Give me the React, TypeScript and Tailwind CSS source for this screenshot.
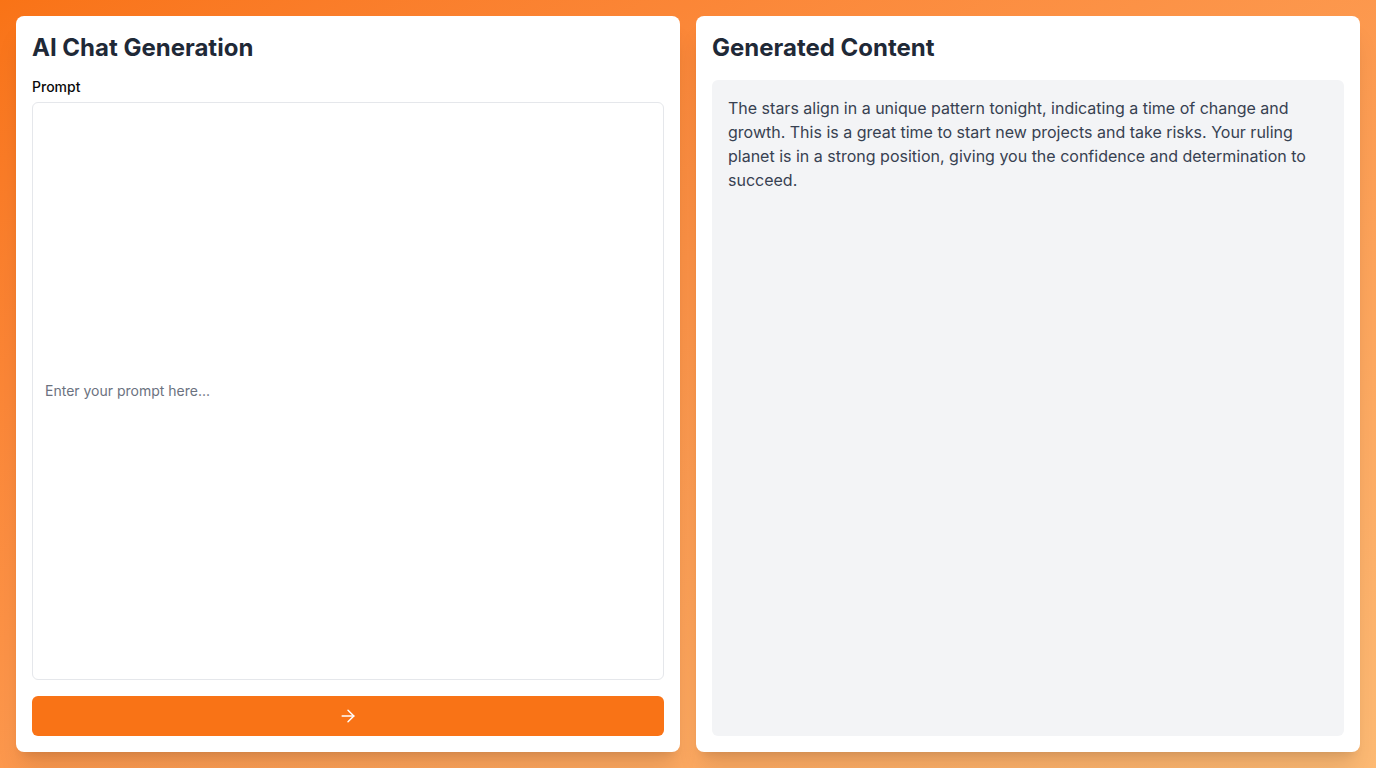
import { ArrowRight } from "lucide-react";

export default function App() {
  return (
    <div className="h-screen w-full bg-gradient-to-br from-[#f97316] to-[#fdba74] p-4 font-['Inter',sans-serif]">
      <div className="grid h-full grid-cols-2 gap-4">
        {/* ── Left: prompt ── */}
        <div className="flex flex-col rounded-lg bg-white p-4 shadow-xl">
          <h1 className="mb-4 text-2xl font-bold text-[#1f2937]">AI Chat Generation</h1>
          <label className="mb-2 block text-sm font-medium leading-none text-[#0a0a0a]">Prompt</label>
          <input
            type="text"
            placeholder="Enter your prompt here..."
            className="w-full flex-1 rounded-md border border-[#e5e7eb] px-3 text-sm text-[#111827] placeholder:text-[#6b7280] outline-none"
          />
          <button className="mt-4 flex h-10 w-full items-center justify-center rounded-md bg-[#f97316] text-white">
            <ArrowRight className="h-5 w-5" strokeWidth={1.75} />
          </button>
        </div>

        {/* ── Right: output ── */}
        <div className="flex flex-col rounded-lg bg-white p-4 shadow-xl">
          <h2 className="mb-4 text-2xl font-bold text-[#1f2937]">Generated Content</h2>
          <div className="flex-1 rounded-md bg-[#f3f4f6] p-4">
            <p className="text-base leading-6 text-[#374151]">
              The stars align in a unique pattern tonight, indicating a time of change and growth. This is a
              great time to start new projects and take risks. Your ruling planet is in a strong position, giving
              you the confidence and determination to succeed.
            </p>
          </div>
        </div>
      </div>
    </div>
  );
}
